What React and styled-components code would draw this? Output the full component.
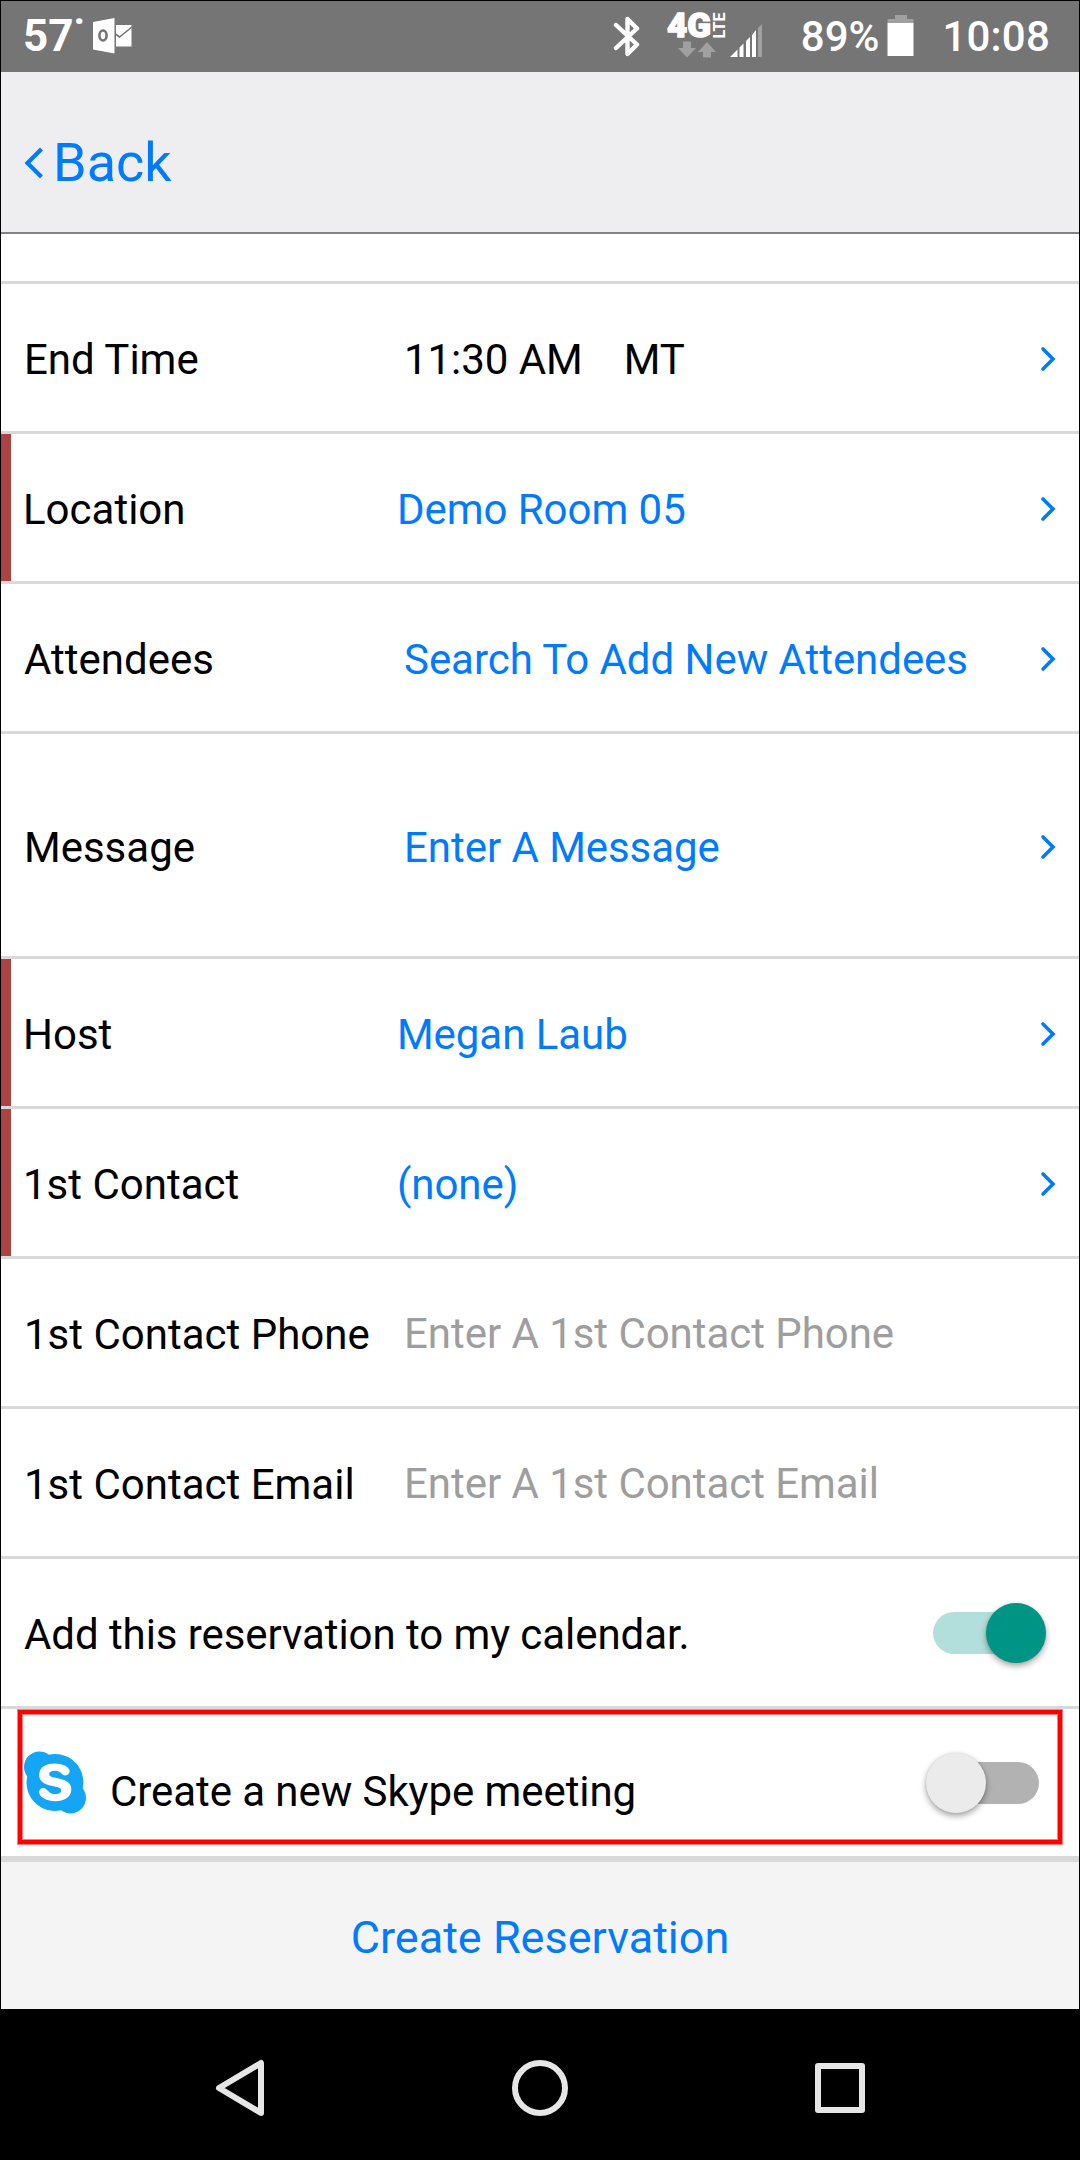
import React from 'react';
import styled, { createGlobalStyle } from 'styled-components';
import { FaSkype } from 'react-icons/fa';

const Global = createGlobalStyle`
  * { box-sizing: border-box; }
  body { margin: 0; background: #000; }
  button { font: inherit; border: 0; background: none; padding: 0; color: inherit; }
`;

const blue = '#007aff';

const Phone = styled.div`
  width: 1080px;
  height: 2160px;
  border: 1px solid #000;
  display: flex;
  flex-direction: column;
  background: #fff;
  color: #000;
  font-family: Roboto, "Liberation Sans", sans-serif;
  font-size: 42px;
  overflow: hidden;
`;

const StatusBar = styled.div`
  height: 71px;
  flex: none;
  background: #757575;
  color: #fff;
  display: flex;
  align-items: flex-start;
  padding: 0 29px 0 22px;
  font-weight: 500;
  svg { display: block; flex: none; }
`;

const Temperature = styled.span`
  font-size: 44px;
  font-weight: 700;
  line-height: 52px;
  margin-top: 9px;
  width: 70px;
  white-space: nowrap;
`;

const StatusText = styled.span`
  line-height: 50px;
  margin-top: 11px;
  margin-left: ${(p) => p.$gap}px;
  letter-spacing: ${(p) => p.$spacing || 0}px;
  white-space: nowrap;
`;

const Spacer = styled.div`
  flex: 1;
`;

const Header = styled.header`
  height: 162px;
  flex: none;
  background: #eeeef0;
  border-bottom: 2px solid #838287;
  display: flex;
  align-items: center;
  padding: 22px 0 0 23px;
`;

const BackButton = styled.button`
  display: flex;
  align-items: center;
  gap: 9px;
  color: ${blue};
  font-size: 54px;
  line-height: 64px;
  svg { display: block; }
`;

const PartialRow = styled.div`
  height: 50px;
  flex: none;
  border-bottom: 3px solid #d9d9d9;
`;

const Row = styled.div`
  position: relative;
  flex: none;
  height: ${(p) => (p.$tall ? 225 : p.$last ? 147 : 150)}px;
  border-bottom: ${(p) => (p.$last ? 0 : 3)}px solid #d9d9d9;
  display: flex;
  align-items: center;
  padding: ${(p) => (p.$tall ? 2 : 0)}px 23px 0;
  ${(p) => p.$required && 'box-shadow: inset 10px 0 0 #ab4342;'}
`;

const Label = styled.div`
  width: ${(p) => (p.$wide ? 'auto' : '380px')};
  flex: ${(p) => (p.$wide ? '1' : 'none')};
  padding-top: 4px;
  margin-left: ${(p) => (p.$required ? -1 : 0)}px;
  margin-right: ${(p) => (p.$required ? -6 : 0)}px;
  line-height: 50px;
  letter-spacing: ${(p) => (p.$wide ? '-0.07px' : '0')};
  white-space: nowrap;
`;

const Value = styled.div`
  flex: 1;
  display: flex;
  gap: 41px;
  padding-top: ${(p) => (p.$placeholder ? 2 : 4)}px;
  line-height: 50px;
  letter-spacing: -0.05px;
  white-space: nowrap;
  color: ${(p) => (p.$placeholder ? '#9e9e9e' : p.$plain ? '#000' : blue)};
`;

const SkypeMark = styled.div`
  width: 86px;
  flex: none;
  display: flex;
  color: #14a5f5;
  svg { display: block; width: 62px; height: 71px; }
`;

const SkypeLabel = styled(Label)`
  padding-top: 18px;
`;

const Switch = styled.div`
  flex: none;
  width: 106px;
  height: 42px;
  border-radius: 21px;
  margin-right: 17px;
  background: ${(p) => (p.$on ? '#b2dfdb' : '#b2b2b2')};
  display: flex;
  align-items: center;
  justify-content: ${(p) => (p.$on ? 'flex-end' : 'flex-start')};
`;

const Thumb = styled.div`
  width: 60px;
  height: 60px;
  flex: none;
  border-radius: 50%;
  margin: 0 -7px;
  background: ${(p) => (p.$on ? '#009485' : '#ebebeb')};
  box-shadow: 0 3px 6px rgba(0, 0, 0, 0.36), 0 0 2px rgba(0, 0, 0, 0.12);
`;

const Highlight = styled.div`
  position: absolute;
  left: 17px;
  top: 1px;
  width: 1044px;
  height: 134px;
  border: 4px solid #f00;
  box-shadow: 0 0 0 1px rgba(255, 0, 0, 0.5), inset 0 0 0 1px rgba(255, 0, 0, 0.5);
`;

const Footer = styled.footer`
  height: 153px;
  flex: none;
  border-top: 6px solid #d9d9d9;
  background: #f4f4f4;
  color: ${blue};
  font-size: 45px;
  display: flex;
  align-items: center;
  justify-content: center;
  padding-top: 4px;
`;

const NavBar = styled.nav`
  flex: 1;
  background: #000;
  display: flex;
  justify-content: center;
  align-items: center;
  gap: 242px;
  padding-top: 8px;
  svg { display: block; }
`;

const Chevron = () => (
  <svg width="16" height="28" viewBox="0 0 16 28" fill="none" stroke={blue} strokeWidth="3.6" strokeLinecap="round">
    <path d="M3 5 L13 15 L3 25" />
  </svg>
);

const OutlookIcon = () => (
  <svg width="40" height="71" viewBox="93 1 40 71">
    <path fill="#fff" d="M93 22 L114.500 18 V53.500 L93 49.500Z" />
    <ellipse cx="103" cy="35.500" rx="3.600" ry="5" fill="none" stroke="#757575" strokeWidth="2.600" />
    <path fill="#fff" d="M116 25 H131.500 V46.500 H116Z" />
    <path fill="none" stroke="#757575" strokeWidth="1.600" d="M115.500 34 L119.500 37 L132 27" />
  </svg>
);

const BluetoothIcon = () => (
  <svg width="28" height="71" viewBox="613 1 28 71" fill="none" stroke="#fff" strokeWidth="4.400" strokeLinejoin="round" strokeLinecap="round">
    <path d="M616 25 L637 44.500 L627.500 54 V19 L637 28.500 L616 48" />
  </svg>
);

const NetworkIcon = () => (
  <svg width="97" height="71" viewBox="666 1 97 71" fontFamily="Roboto, sans-serif" fill="#fff">
    <text x="667" y="37" fontSize="33.500" fontWeight="900" stroke="#fff" strokeWidth="1.400" textLength="44" lengthAdjust="spacingAndGlyphs">4G</text>
    <text transform="translate(725.300 38.500) rotate(-90)" fontSize="16.500" fontWeight="700" textLength="26" lengthAdjust="spacingAndGlyphs">LTE</text>
    <path fill="#a0a0a0" d="M683 41.500 H691 V48 H696 L687 57.500 L678 48 H683Z M703 57.500 H711 V52 H716 L707 42 L698 52 H703Z" />
    <path d="M730 57 L737.500 49.500 V57Z M739.500 47.500 L743.500 43.500 V57 H739.500Z M746 41 L750 37 V57 H746Z M752 35 L756 30 V57 H752Z" />
    <path fill="#a0a0a0" d="M758 28 L762 24 V57 H758Z" />
  </svg>
);

const BatteryIcon = () => (
  <svg width="27" height="71" viewBox="887 1 27 71">
    <path fill="#a0a0a0" d="M895 15 H907 V19 H913.500 V23 H887.500 V19 H895Z" />
    <path fill="#fff" d="M887.500 23 H913.500 V56 H887.500Z" />
  </svg>
);

const rows = [
  { label: 'End Time', value: ['11:30 AM', 'MT'], plain: true, arrow: true },
  { label: 'Location', value: ['Demo Room 05'], required: true, arrow: true },
  { label: 'Attendees', value: ['Search To Add New Attendees'], arrow: true },
  { label: 'Message', value: ['Enter A Message'], arrow: true, tall: true },
  { label: 'Host', value: ['Megan Laub'], required: true, arrow: true },
  { label: '1st Contact', value: ['(none)'], required: true, arrow: true },
  { label: '1st Contact Phone', value: ['Enter A 1st Contact Phone'], placeholder: true },
  { label: '1st Contact Email', value: ['Enter A 1st Contact Email'], placeholder: true },
];

export default function App() {
  return (
    <Phone>
      <Global />
      <StatusBar>
        <Temperature>57˙</Temperature>
        <OutlookIcon />
        <Spacer />
        <BluetoothIcon />
        <StatusText $gap={25} />
        <NetworkIcon />
        <StatusText $gap={38}>89%</StatusText>
        <StatusText $gap={8} />
        <BatteryIcon />
        <StatusText $gap={28} $spacing={0.2}>10:08</StatusText>
      </StatusBar>
      <Header>
        <BackButton>
          <svg width="20" height="34" viewBox="0 0 20 34" fill="none" stroke={blue} strokeWidth="4.200">
            <path d="M17.500 3 L3.500 17 L17.500 31" />
          </svg>
          Back
        </BackButton>
      </Header>
      <PartialRow />
      {rows.map((r) => (
        <Row key={r.label} $tall={r.tall} $required={r.required}>
          <Label $required={r.required}>{r.label}</Label>
          <Value $plain={r.plain} $placeholder={r.placeholder}>
            {r.value.map((v) => <span key={v}>{v}</span>)}
          </Value>
          {r.arrow && <Chevron />}
        </Row>
      ))}
      <Row>
        <Label $wide>Add this reservation to my calendar.</Label>
        <Switch $on><Thumb $on /></Switch>
      </Row>
      <Row $last>
        <SkypeMark><FaSkype /></SkypeMark>
        <SkypeLabel $wide>Create a new Skype meeting</SkypeLabel>
        <Switch><Thumb /></Switch>
        <Highlight />
      </Row>
      <Footer><button>Create Reservation</button></Footer>
      <NavBar>
        <svg width="56" height="60" viewBox="0 0 56 60" fill="none" stroke="#e6e6e6" strokeWidth="6" strokeLinejoin="round">
          <path d="M49 5 V55 L7 30Z" />
        </svg>
        <svg width="60" height="60" viewBox="0 0 60 60" fill="none" stroke="#e6e6e6" strokeWidth="6">
          <circle cx="30" cy="30" r="25" />
        </svg>
        <svg width="56" height="60" viewBox="0 0 56 60" fill="none" stroke="#e6e6e6" strokeWidth="6" strokeLinejoin="round">
          <rect x="6" y="8" width="44" height="44" />
        </svg>
      </NavBar>
    </Phone>
  );
}
